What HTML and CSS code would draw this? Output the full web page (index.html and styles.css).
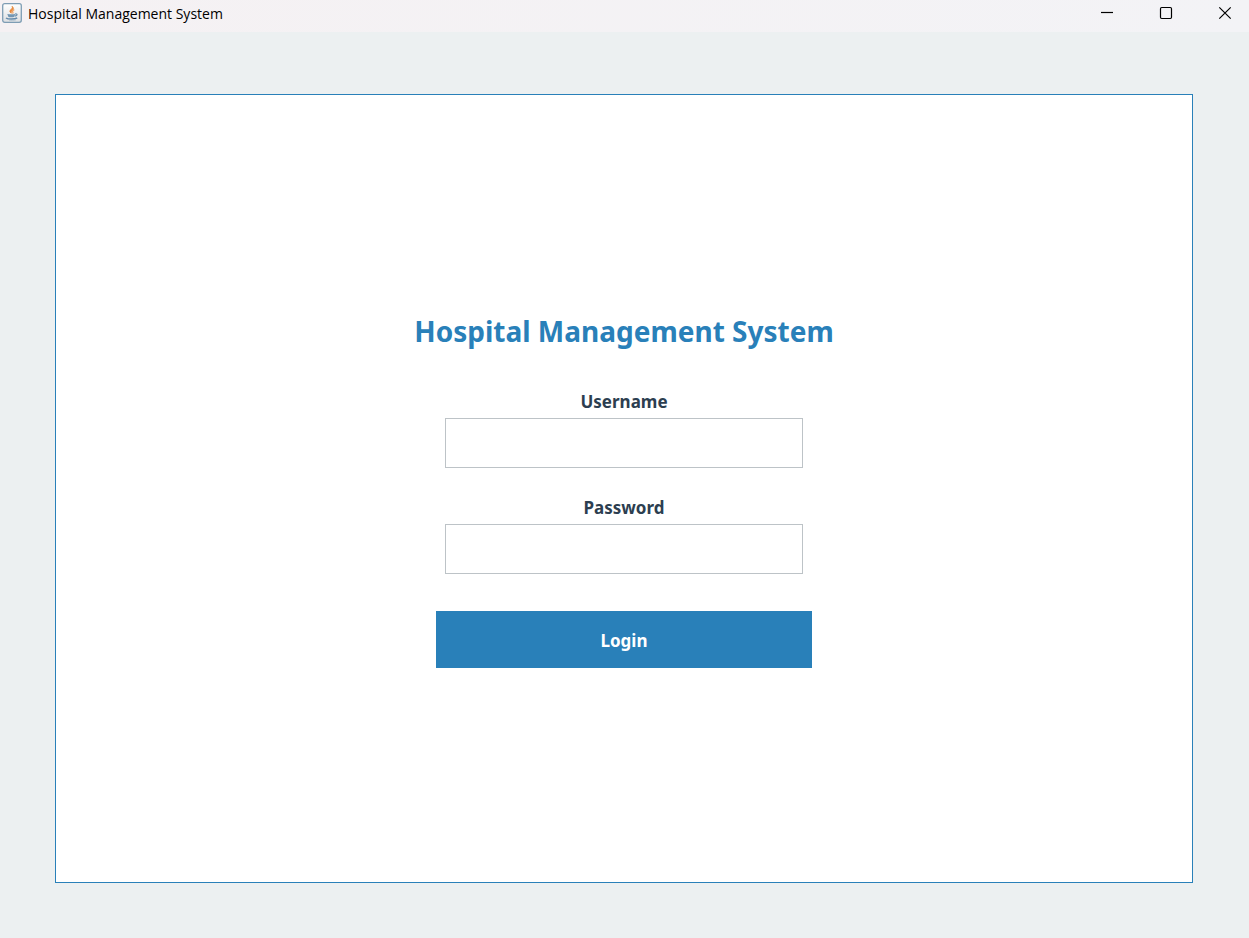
FILE: index.html
```html
<!DOCTYPE html>
<html lang="en">
<head>
<meta charset="utf-8">
<meta name="viewport" content="width=device-width, initial-scale=1">
<title>Hospital Management System</title>
<link rel="stylesheet" href="styles.css">
</head>
<body>
<header class="titlebar">
  <svg class="app-icon" viewBox="0 0 20 20" aria-hidden="true">
    <defs>
      <linearGradient id="tile" x1="0" y1="0" x2="0" y2="1">
        <stop offset="0" stop-color="#ffffff"/>
        <stop offset="1" stop-color="#dddfe2"/>
      </linearGradient>
    </defs>
    <rect x="0.7" y="0.7" width="18.6" height="18.6" rx="2" fill="url(#tile)" stroke="#7e9db4" stroke-width="1.3"/>
    <path d="M9.3 10.2C7.4 8.6 7.5 7.6 9 6.500C10.300 5.500 10.700 5 10.200 3.400C11.900 5.200 11.500 6.200 10.200 7.300C9.200 8.300 9 8.900 9.300 10.200Z" fill="#e8883a" stroke="#e8883a" stroke-width="1"/>
    <path d="M12.300 6.600C10.300 7.600 10.100 8.300 10.900 9.200C11.200 9.700 10.900 10.100 10.500 10.400" fill="none" stroke="#eda060" stroke-width="1.2"/>
    <path d="M5.300 10.900C7.500 11.500 11 11.500 13.200 10.900L12.300 13.700C11 14.400 7.500 14.400 6.300 13.700Z" fill="#7396b3"/>
    <path d="M13 11C15.800 10.300 15.800 12.600 12.800 13.200" fill="none" stroke="#6f93b0" stroke-width="1.2"/>
    <path d="M4 15C6 16.500 12.800 16.500 15.200 14.900" fill="none" stroke="#6389aa" stroke-width="1.500"/>
    <path d="M7 17.100C9 17.500 12 17.400 14 16.800" fill="none" stroke="#9bb3c6" stroke-width="0.700"/>
  </svg>
  <span class="window-title">Hospital Management System</span>
  <div class="window-controls">
    <button class="window-button" type="button" aria-label="Minimize">
      <svg viewBox="0 0 14 14" aria-hidden="true"><path d="M1 6.500H13"/></svg>
    </button>
    <button class="window-button" type="button" aria-label="Maximize">
      <svg viewBox="0 0 14 14" aria-hidden="true"><rect x="1.500" y="1.500" width="11" height="11" rx="1.200"/></svg>
    </button>
    <button class="window-button" type="button" aria-label="Close">
      <svg viewBox="0 0 14 14" aria-hidden="true"><path d="M1.300 1.300L12.700 12.700M12.700 1.300L1.300 12.700"/></svg>
    </button>
  </div>
</header>
<main class="content">
  <form class="card">
    <h1 class="heading">Hospital Management System</h1>
    <div class="field">
      <label class="label" for="username">Username</label>
      <input class="input" id="username" type="text">
    </div>
    <div class="field">
      <label class="label" for="password">Password</label>
      <input class="input" id="password" type="password">
    </div>
    <button class="login" type="submit">Login</button>
  </form>
</main>
</body>
</html>
```
FILE: styles.css
```css
* {
  box-sizing: border-box;
}

body {
  display: flex;
  flex-direction: column;
  min-height: 100vh;
  margin: 0;
  background: #ecf0f1;
  font-family: "Noto Sans", "Open Sans", sans-serif;
}

.titlebar {
  display: flex;
  align-items: flex-start;
  height: 32px;
  padding: 3px 0 0 2px;
  background: linear-gradient(90deg, #f5f1f3, #f3f3f6);
}

.app-icon {
  width: 20px;
  height: 20px;
}

.window-title {
  margin-left: 6px;
  color: #000;
  font-family: "Open Sans", "Noto Sans", sans-serif;
  font-size: 14px;
  line-height: 21px;
}

.window-controls {
  display: flex;
  gap: 11px;
  margin-left: auto;
}

.window-button {
  display: flex;
  justify-content: center;
  width: 48px;
  height: 26px;
  padding: 3px 0 0;
  border: 0;
  background: none;
}

.window-button svg {
  width: 14px;
  height: 14px;
  fill: none;
  stroke: #000;
  stroke-width: 1.2;
}

.content {
  display: flex;
  flex: 1;
  padding: 62px 56px 55px 55px;
}

.card {
  display: flex;
  flex: 1;
  flex-direction: column;
  align-items: center;
  justify-content: center;
  border: 1px solid #2980b9;
  background: #fff;
}

.heading {
  margin: 0 0 34px;
  color: #2980b9;
  font-size: 28px;
  font-weight: 700;
  line-height: 45px;
}

.field {
  display: flex;
  flex-direction: column;
  gap: 2px;
  width: 358px;
  max-width: 100%;
  margin-bottom: 26px;
}

.label {
  color: #2c3e50;
  font-size: 17px;
  font-weight: 700;
  line-height: 28px;
  text-align: center;
}

.input {
  width: 100%;
  height: 50px;
  padding: 0 12px;
  border: 1px solid #bdc3c7;
  background: #fff;
  font: inherit;
  font-size: 17px;
}

.login {
  width: 376px;
  max-width: 100%;
  height: 57px;
  margin-top: 11px;
  padding: 2px 0 0;
  border: 0;
  background: #2980b9;
  color: #fff;
  font: inherit;
  font-size: 17px;
  font-weight: 700;
}
```
